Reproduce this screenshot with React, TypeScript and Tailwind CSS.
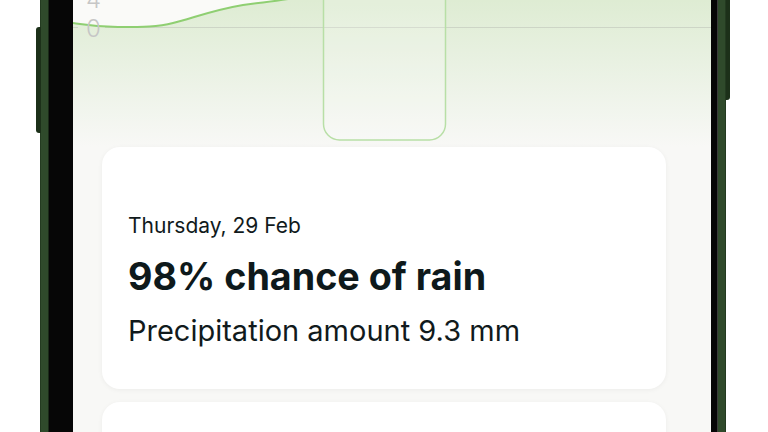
import React from 'react';

// Rain chart header, cropped at the top of the phone screen
function RainChart() {
  const curve =
    'M0 23 C 14 25, 22 27, 45 27 C 70 27, 85 27, 100 23 C 120 18, 140 10, 170 5 C 190 2, 210 1, 230 -4 L 260 -12';
  return (
    <svg width="638" height="147" viewBox="0 0 638 147" className="block shrink-0">
      <defs>
        <linearGradient id="rainFill" x1="0" y1="0" x2="0" y2="1">
          <stop offset="0" stopColor="#dcebd0" />
          <stop offset="0.55" stopColor="#ebf2e5" />
          <stop offset="1" stopColor="#f8f8f6" />
        </linearGradient>
        <linearGradient id="gridFade" x1="0" y1="0" x2="0" y2="1">
          <stop offset="0" stopColor="#d2e6c4" />
          <stop offset="1" stopColor="#f0f4ec" />
        </linearGradient>
      </defs>
      <rect x="0" y="0" width="638" height="147" fill="#fafaf8" />
      <path d={`${curve} L 638 -12 L 638 147 L 0 147 Z`} fill="url(#rainFill)" />
      <line x1="125" y1="0" x2="125" y2="147" stroke="url(#gridFade)" strokeWidth="1" />
      <line x1="498" y1="0" x2="498" y2="147" stroke="url(#gridFade)" strokeWidth="1" />
      <line x1="0" y1="27.5" x2="5" y2="27.5" stroke="#cdd5c6" strokeWidth="1" />
      <line x1="32" y1="27.5" x2="638" y2="27.5" stroke="#cdd5c6" strokeWidth="1" />
      <rect
        x="250.5"
        y="-30"
        width="122"
        height="170"
        rx="16"
        fill="#ffffff"
        fillOpacity="0.18"
        stroke="#b8dfa6"
        strokeWidth="1.5"
      />
      <path d={curve} fill="none" stroke="#8fcf72" strokeWidth="2" />
      <text x="13" y="8" fontSize="24" fontWeight="300" fill="#c6c6c6" fontFamily="Inter, sans-serif">
        4
      </text>
      <text x="13" y="37" fontSize="24" fontWeight="300" fill="#c6c6c6" fontFamily="Inter, sans-serif">
        0
      </text>
    </svg>
  );
}

function ForecastCard() {
  return (
    <div className="shrink-0 rounded-[18px] bg-white shadow-[0_1px_5px_rgba(0,0,0,0.05)] px-[26px] pt-[66px] pb-[40px]">
      <p className="text-[21px] leading-[1.2] text-[#111a1c]">Thursday, 29 Feb</p>
      <h2 className="mt-[16px] text-[37.7px] leading-[1.2] font-bold text-[#0e191b]">
        98% chance of rain
      </h2>
      <p className="mt-[15px] text-[29px] leading-[1.2] text-[#111a1c]">
        Precipitation amount 9.3 mm
      </p>
    </div>
  );
}

export default function App() {
  return (
    <div
      className="flex h-[432px] w-[768px] overflow-hidden bg-white"
      style={{ fontFamily: 'Inter, "Noto Sans", sans-serif' }}
    >
      {/* left edge with side button */}
      <div className="relative w-[40px] shrink-0">
        <div className="absolute left-[36px] top-[27px] h-[106px] w-[5px] rounded-l-[3px] bg-[#1c3019]" />
      </div>
      <div className="w-[9px] shrink-0 bg-[#2f4a2b] border-l border-[#243b21] border-r border-r-[#1a2a18]" />
      <div className="w-[24px] shrink-0 bg-[#060606]" />

      {/* screen */}
      <div className="flex h-full w-[638px] shrink-0 flex-col overflow-hidden bg-[#f8f8f6]">
        <RainChart />
        <div className="flex shrink-0 flex-col gap-[13px] pl-[29px] pr-[45px]">
          <ForecastCard />
          <div className="h-[60px] shrink-0 rounded-[18px] bg-white shadow-[0_1px_5px_rgba(0,0,0,0.05)]" />
        </div>
      </div>

      {/* right edge */}
      <div className="w-[6px] shrink-0 bg-[#060606]" />
      <div className="w-[1px] shrink-0 bg-[#3a3a3a]" />
      <div className="w-[8px] shrink-0 bg-[#2f4a2b] border-r border-[#233a20]" />
      <div className="relative flex-1">
        <div className="absolute left-0 top-0 h-[100px] w-[4px] rounded-br-[3px] bg-[#1c3019]" />
      </div>
    </div>
  );
}
